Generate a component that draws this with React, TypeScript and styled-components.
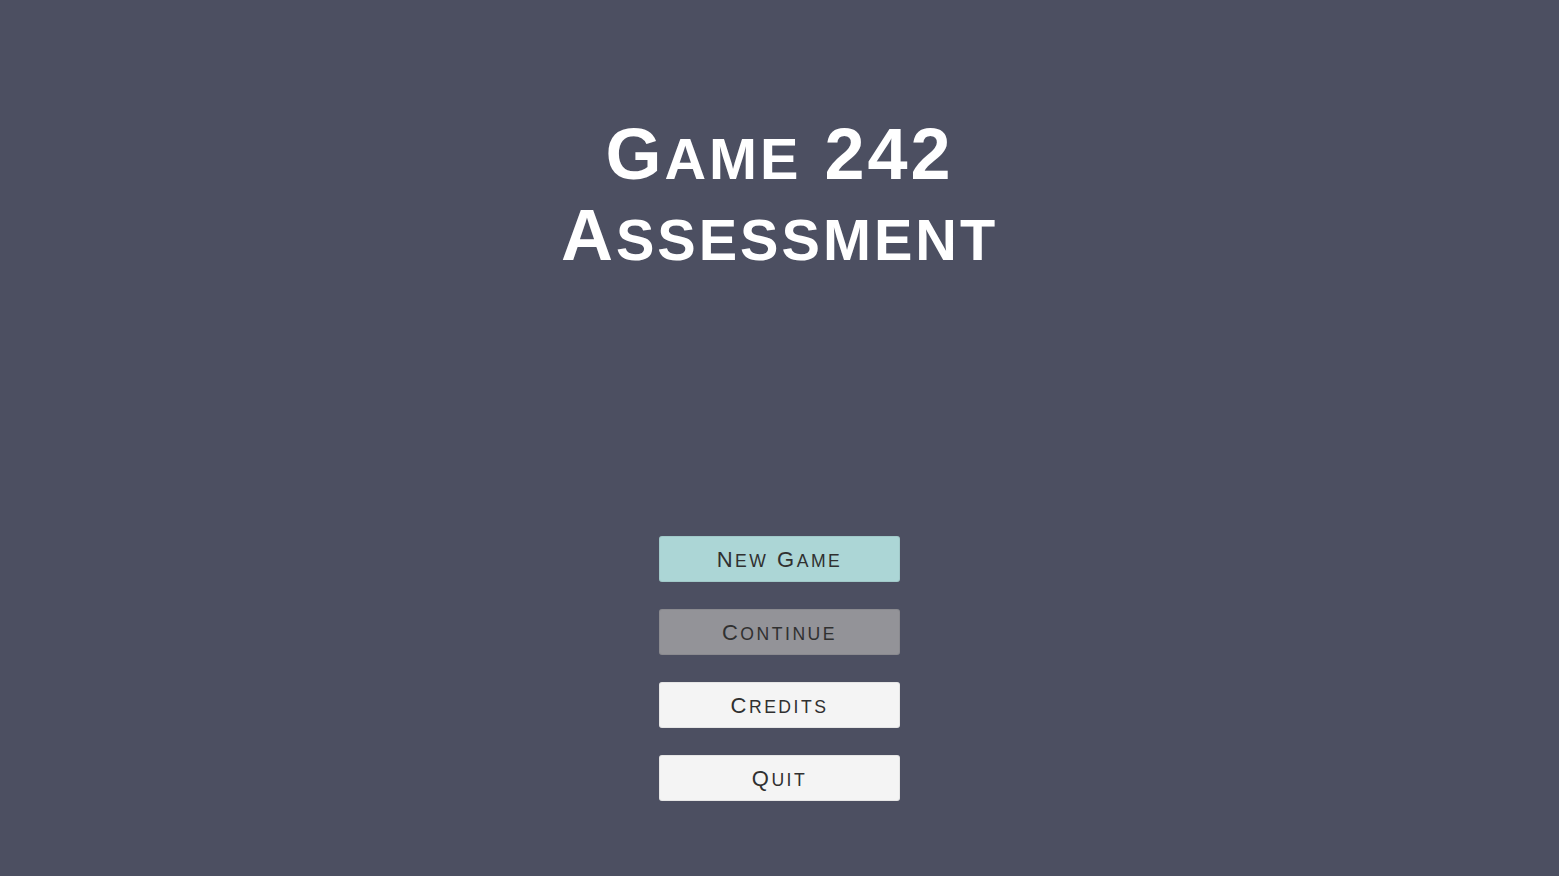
import React from "react";
import styled, { createGlobalStyle } from "styled-components";

const GlobalStyle = createGlobalStyle`
  html, body {
    margin: 0;
    padding: 0;
    background: #4c4f61;
  }
  body {
    font-family: "Liberation Sans", Arial, sans-serif;
  }
`;

type Variant = "primary" | "disabled" | "plain";

const buttons: { label: string; variant: Variant }[] = [
  { label: "New Game", variant: "primary" },
  { label: "Continue", variant: "disabled" },
  { label: "Credits", variant: "plain" },
  { label: "Quit", variant: "plain" },
];

// small caps the way the game UI draws them: capitals and digits stay
// full size, lowercase runs are upper-cased at 80%
function SmallCaps({ text }: { text: string }) {
  const runs = text.match(/[a-z]+|[^a-z]+/g) ?? [];
  return (
    <>
      {runs.map((run, i) =>
        /[a-z]/.test(run) ? <Lower key={i}>{run}</Lower> : <React.Fragment key={i}>{run}</React.Fragment>
      )}
    </>
  );
}

export default function App() {
  return (
    <>
      <GlobalStyle />
      <Screen>
        <Title>
          <TitleLine>
            <SmallCaps text="Game 242" />
          </TitleLine>
          <TitleLine>
            <SmallCaps text="Assessment" />
          </TitleLine>
        </Title>
        <Menu>
          {buttons.map((b) => (
            <MenuButton key={b.label} $variant={b.variant}>
              <SmallCaps text={b.label} />
            </MenuButton>
          ))}
        </Menu>
      </Screen>
    </>
  );
}

const Screen = styled.div`
  width: 100%;
  height: 876px;
  background: #4c4f61;
  display: flex;
  flex-direction: column;
  align-items: center;
  padding-top: 114px;
  box-sizing: border-box;
  overflow: hidden;
`;

const Lower = styled.span`
  text-transform: uppercase;
  font-size: 0.8em;
  line-height: 0;
`;

const Title = styled.h1`
  margin: 0;
  display: flex;
  flex-direction: column;
  align-items: center;
  color: #ffffff;
  font-family: "Liberation Sans", Arial, sans-serif;
  font-weight: 700;
  font-size: 72px;
  line-height: 81px;
  letter-spacing: 3px;
`;

const TitleLine = styled.span`
  display: block;
  white-space: nowrap;
`;

const Menu = styled.div`
  margin-top: 260px;
  display: flex;
  flex-direction: column;
  gap: 27px;
`;

const bg: Record<Variant, string> = {
  primary: "#acd6d6",
  disabled: "#939398",
  plain: "#f4f4f4",
};

const MenuButton = styled.button<{ $variant: Variant }>`
  width: 241px;
  height: 46px;
  border: none;
  border-radius: 3px;
  box-shadow: inset 0 0 0 1px rgba(0, 0, 0, 0.06);
  background: ${(p) => bg[p.$variant]};
  color: #303030;
  font-family: "Liberation Sans", Arial, sans-serif;
  font-size: 22px;
  line-height: 48px;
  letter-spacing: 2.5px;
  cursor: pointer;
  padding: 0;
`;
